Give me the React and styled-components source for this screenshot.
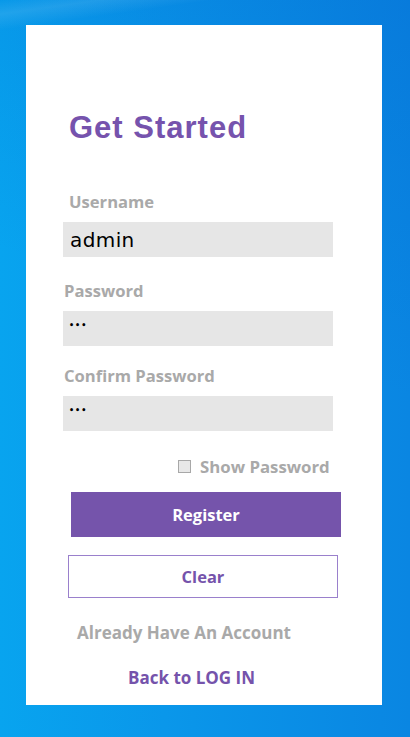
import React from "react";
import styled, { createGlobalStyle } from "styled-components";

const Global = createGlobalStyle`
  html, body { margin: 0; padding: 0; }
  body {
    width: 410px;
    height: 737px;
    overflow: hidden;
    background:
      linear-gradient(172deg, rgba(255,255,255,0) 0px, rgba(255,255,255,0.10) 14px, rgba(255,255,255,0) 30px),
      linear-gradient(200deg, rgba(0,90,200,0.25) 0%, rgba(0,90,200,0) 45%),
      linear-gradient(90deg, #08a4ef 0%, #0a97ea 40%, #0a86e2 100%);
  }
`;

const Screen = styled.div`
  width: 410px;
  height: 737px;
  padding: 25px 0 0 26px;
  box-sizing: border-box;
`;

const Panel = styled.div`
  width: 356px;
  height: 680px;
  background: #ffffff;
  display: flex;
  flex-direction: column;
  align-items: flex-start;
  box-sizing: border-box;
  padding-top: 85px;
`;

const Title = styled.h1`
  margin: 0 0 0 43px;
  font-family: "Liberation Sans", Arial, sans-serif;
  font-weight: 700;
  font-size: 31px;
  line-height: 36px;
  letter-spacing: 1px;
  color: #7653ad;
`;

const Label = styled.label`
  display: block;
  margin: ${(p) => p.$top}px 0 0 ${(p) => p.$left}px;
  font-family: "Open Sans", "Noto Sans", sans-serif;
  font-weight: 700;
  font-size: 16.6px;
  line-height: 20px;
  color: #a9a9a9;
`;

const Field = styled.input`
  display: block;
  margin: 10px 0 0 37px;
  width: 270px;
  height: 35px;
  box-sizing: border-box;
  border: none;
  outline: none;
  background: #e6e6e6;
  padding: 0 0 ${(p) => (p.$small ? 6 : 0)}px ${(p) => (p.$small ? 6 : 7)}px;
  font-family: "DejaVu Sans", sans-serif;
  font-size: ${(p) => (p.$small ? 8 : 20)}px;
  font-weight: ${(p) => (p.$small ? 700 : 400)};
  letter-spacing: ${(p) => (p.$small ? 1 : 0.4)}px;
  color: #000000;
`;

const ShowRow = styled.label`
  display: flex;
  align-items: center;
  gap: 9px;
  margin: 25px 0 0 152px;
  height: 20px;
  font-family: "Open Sans", "Noto Sans", sans-serif;
  font-weight: 700;
  font-size: 16.8px;
  color: #a9a9a9;
`;

const Box = styled.span`
  display: block;
  width: 13px;
  height: 13px;
  box-sizing: border-box;
  border: 1px solid #a8a8a8;
  background: #e8e8e8;
`;

const Button = styled.button`
  display: flex;
  align-items: center;
  justify-content: center;
  margin: ${(p) => p.$top}px 0 0 ${(p) => p.$left}px;
  width: 270px;
  height: ${(p) => (p.$outline ? 43 : 45)}px;
  box-sizing: border-box;
  border: ${(p) => (p.$outline ? "1px solid #9a80cc" : "none")};
  background: ${(p) => (p.$outline ? "#ffffff" : "#7554ab")};
  color: ${(p) => (p.$outline ? "#7553ab" : "#ffffff")};
  font-family: "Open Sans", "Noto Sans", sans-serif;
  font-weight: 700;
  font-size: 16.5px;
  padding: 0;
  cursor: pointer;
`;

const Note = styled.div`
  margin: ${(p) => p.$top}px 0 0 ${(p) => p.$left}px;
  font-family: "Open Sans", "Noto Sans", sans-serif;
  font-weight: 700;
  font-size: 17px;
  line-height: 20px;
  color: ${(p) => (p.$link ? "#7553ab" : "#a9a9a9")};
  cursor: ${(p) => (p.$link ? "pointer" : "default")};
`;

export default function App() {
  return (
    <Screen>
      <Global />
      <Panel>
        <Title>Get Started</Title>
        <Label $top={46} $left={43}>Username</Label>
        <Field defaultValue="admin" readOnly />
        <Label $top={24} $left={38}>Password</Label>
        <Field $small defaultValue="•••" readOnly />
        <Label $top={20} $left={38}>Confirm Password</Label>
        <Field $small defaultValue="•••" readOnly />
        <ShowRow>
          <Box />
          Show Password
        </ShowRow>
        <Button $top={16} $left={45}>Register</Button>
        <Button $outline $top={18} $left={42}>Clear</Button>
        <Note $top={25} $left={51}>Already Have An Account</Note>
        <Note $link $top={25} $left={102}>Back to LOG IN</Note>
      </Panel>
    </Screen>
  );
}
